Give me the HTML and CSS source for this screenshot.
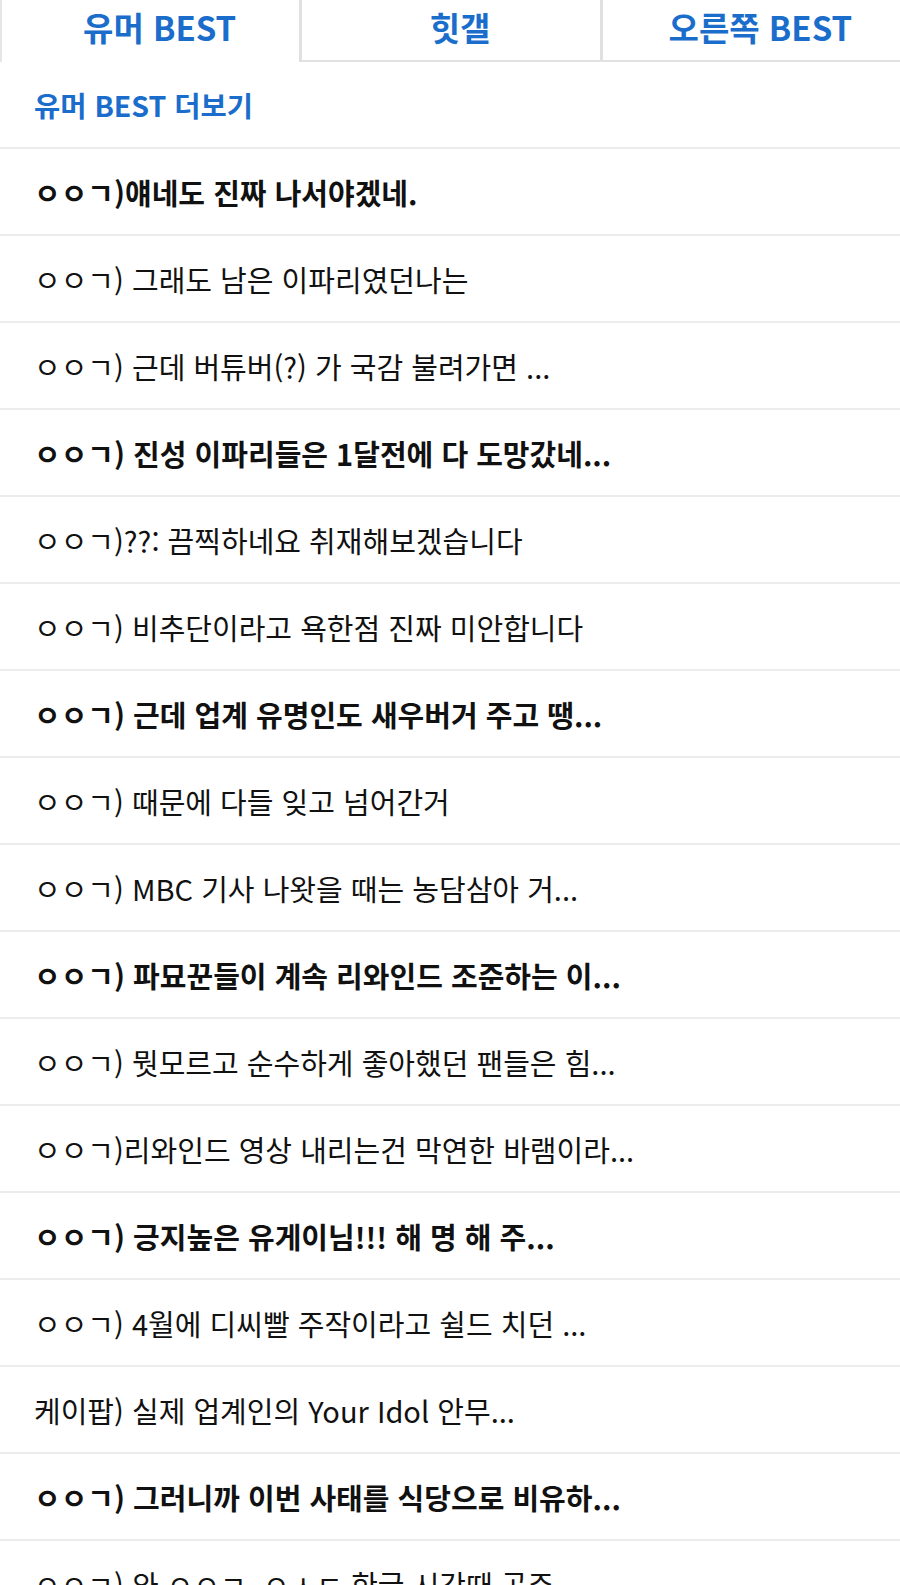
FILE: index.html
```html
<!DOCTYPE html>
<html lang="ko">
<head>
    <meta charset="UTF-8">
    <meta name="viewport" content="width=device-width, initial-scale=1.0">
    <title>유머 BEST</title>
    <link rel="stylesheet" href="styles.css">
</head>
<body>
    <!-- 탭 -->
    <div class="tabs">
        <a class="tab active" href="#">유머 BEST</a>
        <a class="tab" href="#">힛갤</a>
        <a class="tab" href="#">오른쪽 BEST</a>
    </div>

    <div class="more">
        <a href="#">유머 BEST 더보기</a>
    </div>

    <!-- 게시글 목록 -->
    <ul class="best-list">
        <li class="strong"><a href="#">ㅇㅇㄱ)얘네도 진짜 나서야겠네.</a></li>
        <li><a href="#">ㅇㅇㄱ) 그래도 남은 이파리였던나는</a></li>
        <li><a href="#">ㅇㅇㄱ) 근데 버튜버(?) 가 국감 불려가면 ...</a></li>
        <li class="strong"><a href="#">ㅇㅇㄱ) 진성 이파리들은 1달전에 다 도망갔네...</a></li>
        <li><a href="#">ㅇㅇㄱ)??: 끔찍하네요 취재해보겠습니다</a></li>
        <li><a href="#">ㅇㅇㄱ) 비추단이라고 욕한점 진짜 미안합니다</a></li>
        <li class="strong"><a href="#">ㅇㅇㄱ) 근데 업계 유명인도 새우버거 주고 땡...</a></li>
        <li><a href="#">ㅇㅇㄱ) 때문에 다들 잊고 넘어간거</a></li>
        <li><a href="#">ㅇㅇㄱ) MBC 기사 나왓을 때는 농담삼아 거...</a></li>
        <li class="strong"><a href="#">ㅇㅇㄱ) 파묘꾼들이 계속 리와인드 조준하는 이...</a></li>
        <li><a href="#">ㅇㅇㄱ) 뭣모르고 순수하게 좋아했던 팬들은 힘...</a></li>
        <li><a href="#">ㅇㅇㄱ)리와인드 영상 내리는건 막연한 바램이라...</a></li>
        <li class="strong"><a href="#">ㅇㅇㄱ) 긍지높은 유게이님!!! 해 명 해 주...</a></li>
        <li><a href="#">ㅇㅇㄱ) 4월에 디씨빨 주작이라고 쉴드 치던 ...</a></li>
        <li><a href="#">케이팝) 실제 업계인의 Your Idol 안무...</a></li>
        <li class="strong"><a href="#">ㅇㅇㄱ) 그러니까 이번 사태를 식당으로 비유하...</a></li>
        <li><a href="#">ㅇㅇㄱ) 와 ㅇㅇㄱ, ㅇㅅㄷ 한글 시간때 공주...</a></li>
    </ul>
</body>
</html>
```

FILE: styles.css
```css
body {
    margin: 0;
    font-family: "Noto Sans CJK KR", "Noto Sans", sans-serif;
    background-color: #fff;
    color: #111;
}
a {
    text-decoration: none;
    color: inherit;
}
.tabs {
    display: flex;
    height: 62px;
}
.tab {
    flex: 1;
    box-sizing: border-box;
    display: flex;
    align-items: center;
    justify-content: center;
    font-size: 33px;
    font-weight: bold;
    color: #1b6dcc;
    border-bottom: 2px solid #e2e2e2;
    padding-bottom: 6px;
    padding-left: 18px;
}
.tab.active {
    border-bottom: none;
    border-left: 2px solid #e6e6e6;
    padding-bottom: 8px;
}
.tab:nth-child(1),
.tab:nth-child(2) {
    border-right: 3px solid #e0e0e0;
}
.more {
    height: 85px;
    display: flex;
    align-items: center;
    padding-left: 34px;
    border-bottom: 2px solid #ececec;
}
.more a {
    font-size: 28.5px;
    font-weight: bold;
    color: #1b6dcc;
}
.best-list {
    list-style: none;
    margin: 0;
    padding: 0;
}
.best-list li {
    height: 85px;
    display: flex;
    align-items: center;
    padding-left: 34px;
    border-bottom: 2px solid #ececec;
    font-size: 29px;
    white-space: nowrap;
}
.best-list li.strong {
    font-weight: bold;
}
```
